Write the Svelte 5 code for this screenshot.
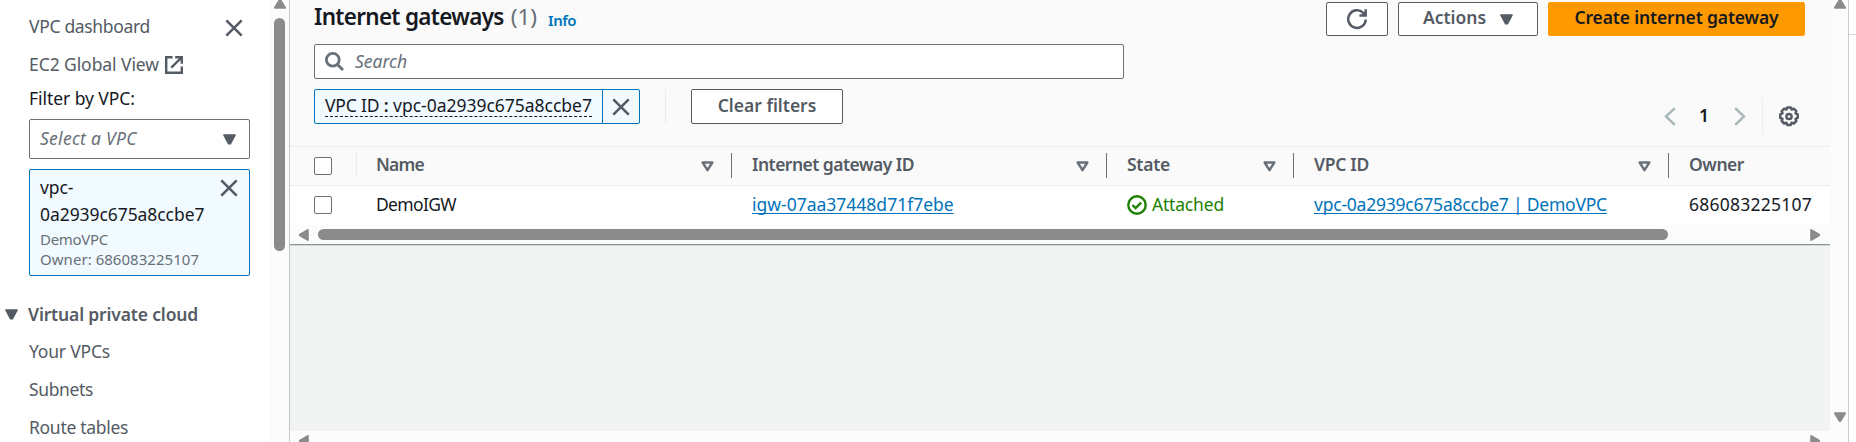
<script>
  const links = [
    ['Your VPCs', 'ls-yv'],
    ['Subnets', 'ls-sn'],
    ['Route tables', 'ls-rt']
  ];
  const columns = [
    { label: 'Name', cls: 'ls-name', sort: true },
    { label: 'Internet gateway ID', cls: 'ls-igw', sort: true },
    { label: 'State', cls: 'ls-state', sort: true },
    { label: 'VPC ID', cls: 'ls-vpc', sort: true },
    { label: 'Owner', cls: 'ls-owner', sort: false }
  ];
</script>

{#snippet close()}
  <svg class="close" width="18" height="18" viewBox="0 0 18 18"><path d="M1.3 1.3l15.4 15.4M16.7 1.3L1.3 16.7" stroke="#545b64" stroke-width="2.6" fill="none" /></svg>
{/snippet}

{#snippet caret()}
  <svg class="caret" width="13" height="11" viewBox="0 0 13 11"><path d="M1 1h11L7.300 9.800H5.700z" fill="#545b64" stroke="#545b64" stroke-width="1.6" stroke-linejoin="round" /></svg>
{/snippet}

{#snippet arrow(dir)}
  <svg class="arrow {dir}" width="12" height="10" viewBox="0 0 12 10"><path d="M5.600 1h.8L11 8.800H1z" fill="#8b8b8b" stroke="#8b8b8b" stroke-width="2" stroke-linejoin="round" /></svg>
{/snippet}

<div class="page">
  <aside>
    <nav>
      <div class="item first"><span class="ls-dash">VPC dashboard</span>{@render close()}</div>
      <div class="item">
        <span class="ls-ec2">EC2 Global View</span>
        <svg class="ext" width="18" height="18" viewBox="0 0 18 18" fill="none" stroke="#545b64" stroke-width="2.4"><path d="M7.5 1.2H1.2v15.6h15.6v-6.3M10.2 1.2h6.6v6.600M16.5 1.5L6.300 11.700" /></svg>
      </div>
      <div class="filter">Filter by VPC:</div>
      <div class="select"><i>Select a VPC</i>{@render caret()}</div>
      <div class="card">
        <div class="cardhead"><div class="vpc">vpc-<br />0a2939c675a8ccbe7</div>{@render close()}</div>
        <small class="ls-demo">DemoVPC</small>
        <small>Owner: 686083225107</small>
      </div>
      <div class="section">{@render caret()}<b>Virtual private cloud</b></div>
      {#each links as [label, cls]}
        <div class="item link"><span class={cls}>{label}</span></div>
      {/each}
    </nav>
    <div class="vbar">{@render arrow('up')}<div class="thumb"></div></div>
  </aside>

  <main>
    <header>
      <div class="top">
        <h1>Internet gateways</h1><span class="count">(1)</span><span class="info">Info</span>
        <div class="actions">
          <button class="refresh" aria-label="Refresh">
            <svg width="22" height="22" viewBox="0 0 22 22" fill="none" stroke="#545b64" stroke-width="2.5"><path d="M19.800 11.500a8.800 8.800 0 1 1-2.600-6.700l1.600 1.800M19.700 1.200v6.300h-6.300" /></svg>
          </button>
          <button class="act"><span>Actions</span>{@render caret()}</button>
          <button class="create"><span>Create internet gateway</span></button>
        </div>
      </div>
      <div class="search">
        <svg width="19" height="19" viewBox="0 0 19 19" fill="none" stroke="#687078" stroke-width="2.8"><circle cx="7.800" cy="7.800" r="6.400" /><path d="M12.400 12.400l5.600 5.600" /></svg>
        <i>Search</i>
      </div>
      <div class="filters">
        <div class="token">
          <div class="tokentext"><span><em>VPC ID</em> <b>:</b> vpc-0a2939c675a8ccbe7</span></div>
          <div class="tokenclose">{@render close()}</div>
        </div>
        <div class="rule"></div>
        <button class="clear"><span>Clear filters</span></button>
        <div class="pager">
          <svg width="12" height="19" viewBox="0 0 12 19" fill="none" stroke="#aab7b8" stroke-width="2.500"><path d="M10.800 1.200L2 9.500l8.800 8.300" /></svg>
          <b>1</b>
          <svg width="12" height="19" viewBox="0 0 12 19" fill="none" stroke="#aab7b8" stroke-width="2.500"><path d="M1.200 1.200L10 9.500l-8.800 8.300" /></svg>
          <div class="rule"></div>
          <svg class="gear" width="22" height="22" viewBox="0 0 22 22" fill="none" stroke="#545b64" stroke-width="2.500" stroke-linejoin="round"><path d="M9.200 1.500h3.600l.8 2 2.200-.8 2.500 2.500-.8 2.200 2.200.9v3.600l-2.200.9.8 2.200-2.500 2.500-2.200-.8-.8 2.200H9.200l-.8-2.200-2.200.8-2.500-2.500.8-2.200-2.200-.9V8.300l2.200-.9-.8-2.200 2.500-2.500 2.200.8z" /><circle cx="11" cy="10.500" r="2.600" /></svg>
        </div>
      </div>
    </header>

    <div class="row head">
      <div class="cell check"><span class="box"></span></div>
      {#each columns as c}
        <div class="cell">
          <span class={c.cls}>{c.label}</span>
          {#if c.sort}
            <svg width="13" height="11" viewBox="0 0 13 11"><path d="M1.700 1.600h9.600L6.500 9.200z" fill="none" stroke="#687078" stroke-width="2.500" stroke-linejoin="round" /></svg>
          {/if}
        </div>
      {/each}
    </div>
    <div class="row body">
      <div class="cell check"><span class="box"></span></div>
      <div class="cell"><span class="ls-digw">DemoIGW</span></div>
      <div class="cell"><a href="#igw">igw-07aa37448d71f7ebe</a></div>
      <div class="cell state">
        <svg width="20" height="20" viewBox="0 0 20 20" fill="none" stroke="#1d8102" stroke-width="2.400"><circle cx="10" cy="10" r="8.700" /><path d="M5.400 10l3.200 3.100 5.600-5.400" /></svg>
        <span>Attached</span>
      </div>
      <div class="cell"><a class="ls-vlink" href="#vpc">vpc-0a2939c675a8ccbe7 | DemoVPC</a></div>
      <div class="cell"><span class="ls-num">686083225107</span></div>
    </div>
    <div class="hbar">{@render arrow('left')}<div class="thumb"></div>{@render arrow('right')}</div>
    <div class="blank"></div>
    <div class="hbar lower">{@render arrow('left')}{@render arrow('right')}</div>
  </main>
  <div class="vbar outer">{@render arrow('up')}{@render arrow('down')}</div>
  <div class="edge"></div>
</div>

<style>
  :global(body) { overflow: hidden; }
  * { box-sizing: border-box; }
  .page { display: flex; width: 1856px; height: 442px; overflow: hidden; background: #fff; font: 17.5px/27px "Noto Sans", sans-serif; color: #16191f; white-space: nowrap; }
  svg { display: block; flex: none; }
  aside { display: flex; width: 290px; flex: none; border-right: 1px solid #c4c8ca; }
  nav { width: 270px; flex: none; padding: 7px 0 0 29px; color: #545b64; }
  .item { display: flex; align-items: center; height: 38px; width: 214px; }
  .first { justify-content: space-between; }
  .first .close { margin-top: 4px; }
  .ext { margin: 2px 0 0 6px; }
  .filter { height: 31px; line-height: 31px; margin-bottom: 5px; color: #16191f; letter-spacing: -.06px; }
  .select { display: flex; justify-content: space-between; align-items: center; width: 221px; height: 40px; padding: 0 13px 0 10px; border: 1px solid #687078; border-radius: 2px; background: #fff; }
  .select i { color: #687078; letter-spacing: .27px; margin-top: -2px; }
  .card { width: 221px; height: 107px; margin-top: 10px; padding: 4px 11px 0 10px; border: 1px solid #0073bb; border-radius: 2px; background: #f1faff; }
  .cardhead { display: flex; justify-content: space-between; color: #16191f; margin-bottom: 1px; }
  .vpc { letter-spacing: -.07px; }
  .cardhead .close { margin: 5px 0 0 -20px; }
  small { display: block; font-size: 15px; line-height: 20px; color: #687078; letter-spacing: .04px; }
  .section { display: flex; align-items: center; height: 38px; margin: 19px 0 0 -24px; gap: 10px; letter-spacing: -.16px; }
  b { font-weight: 600; }
  .link { height: 37.700px; }
  .ls-dash { letter-spacing: -.33px; } .ls-ec2 { letter-spacing: -.08px; }
  .ls-yv { letter-spacing: -.2px; } .ls-sn { letter-spacing: -.37px; } .ls-rt { letter-spacing: -.3px; }
  .ls-demo { letter-spacing: -.3px; }

  .vbar { display: flex; flex-direction: column; align-items: center; width: 19px; background: #fcfcfc; }
  .vbar .up { margin-top: -1px; }
  .vbar .thumb { width: 11px; height: 233px; margin-top: 9px; border-radius: 6px; background: #8b8b8b; }
  .down { transform: rotate(180deg); }
  .left { transform: rotate(-90deg); }
  .right { transform: rotate(90deg); }
  .outer { width: 18px; flex: none; justify-content: space-between; padding: 0 0 20px 1px; }
  .edge { width: 8px; flex: none; border-left: 1px solid #c8cdd0; background: linear-gradient(#fff 34px, #d5dbdb 34px, #d5dbdb 35px, #fff 35px); }

  main { display: flex; flex-direction: column; width: 1540px; flex: none; overflow: hidden; }
  header { height: 146px; flex: none; padding-left: 24px; background: #fafafa; }
  .top { display: flex; height: 44px; align-items: flex-start; }
  h1 { margin: 0; font-size: 22.500px; line-height: 34px; font-weight: 600; letter-spacing: -.7px; }
  .count { margin-left: 7px; font-size: 22.500px; line-height: 34px; color: #687078; }
  .info { margin-left: 11px; font-size: 15px; line-height: 40px; font-weight: 600; color: #0073bb; letter-spacing: -.49px; }
  .actions { display: flex; gap: 10px; margin: 2px 25px 0 auto; }
  button { display: flex; align-items: center; justify-content: center; height: 34px; padding: 0; border: 1px solid #545b64; border-radius: 2px; background: #fff; color: #545b64; font: 600 17.500px/27px "Noto Sans", sans-serif; }
  button span { margin-top: -3px; }
  .refresh { width: 62px; }
  .act { width: 140px; gap: 14px; }
  .create { width: 257px; border-color: #ff9900; background: #ff9900; color: #16191f; letter-spacing: -.15px; }
  .search { display: flex; align-items: center; gap: 11px; width: 810px; height: 35px; padding-left: 10px; border: 1px solid #687078; border-radius: 2px; background: #fff; color: #687078; }
  .search i { margin-top: -1px; }
  .filters { display: flex; padding-top: 10px; }
  .token { display: flex; width: 326px; height: 35px; border: 1px solid #0073bb; border-radius: 2px; background: #f1faff; }
  .tokentext { width: 288px; padding-left: 10px; border-right: 1px solid #0073bb; }
  .tokentext span { display: block; width: 267px; height: 27px; line-height: 31px; border-bottom: 1px dashed #16191f; letter-spacing: -.02px; }
  .tokentext em { font-style: normal; letter-spacing: -.2px; }
  .tokenclose { flex: 1; display: grid; place-items: center; }
  .rule { width: 1px; height: 35px; background: #eaeded; }
  .token + .rule { margin: 0 25px; }
  .clear { width: 152px; height: 35px; }
  .pager { display: flex; align-items: center; height: 35px; margin: 10px 30px 0 auto; }
  .pager b { width: 10px; margin: -2px 25px 0 23px; text-align: center; }
  .pager .rule { margin: 0 15px 0 16px; }
  .row { display: grid; grid-template-columns: 67px 375px 375px 187px 375px 1fr; flex: none; }
  .cell { display: flex; align-items: center; padding-left: 20px; min-width: 0; }
  .cell span, .cell a { margin-top: -3px; }
  .head { height: 40px; border: solid #eaeded; border-width: 1px 0; background: #fafafa; color: #545b64; font-weight: 600; }
  .head .cell { justify-content: space-between; height: 25px; margin-top: 6px; padding-right: 17px; border-right: 1px solid #687078; }
  .head .check { border-right-color: #eaeded; }
  .head .cell:last-child { border: 0; }
  .head svg { margin-top: 1px; }
  .head .check, .body .check { padding-left: 24px; }
  .cell .box { width: 18px; height: 18px; margin: 0; border: 1px solid #687078; border-radius: 2px; background: #fff; }
  .body { height: 39px; background: #fff; }
  .body span, .body a { margin-top: -3px; }
  .body .box { margin-top: -1px; }
  .row .cell:nth-child(2) span { margin-left: -1px; }
  .state { gap: 5px; color: #1d8102; letter-spacing: -.19px; }
  .state svg { margin-top: -1px; }
  a { color: #0073bb; text-decoration: underline; text-underline-offset: 2px; text-decoration-thickness: 1px; text-decoration-skip-ink: none; }
  .ls-name { letter-spacing: -.79px; } .ls-igw { letter-spacing: -.53px; } .ls-state { letter-spacing: -.26px; }
  .ls-vpc { letter-spacing: -.3px; } .ls-owner { letter-spacing: -.46px; } .ls-digw { letter-spacing: -.65px; }
  .ls-vlink { letter-spacing: -.22px; } .ls-num { letter-spacing: .24px; }
  .hbar { display: flex; align-items: center; height: 19px; flex: none; padding: 0 9px 0 8px; background: #fcfcfc; }
  .hbar .thumb { width: 1350px; height: 11px; margin: -1px auto 0 8px; border-radius: 6px; background: #8b8b8b; }
  .hbar .right { margin-left: auto; }
  .blank { height: 187px; flex: none; border-top: 1px solid #879596; box-shadow: inset 0 1px #d2d7d8; background: #f2f3f3; }
</style>
